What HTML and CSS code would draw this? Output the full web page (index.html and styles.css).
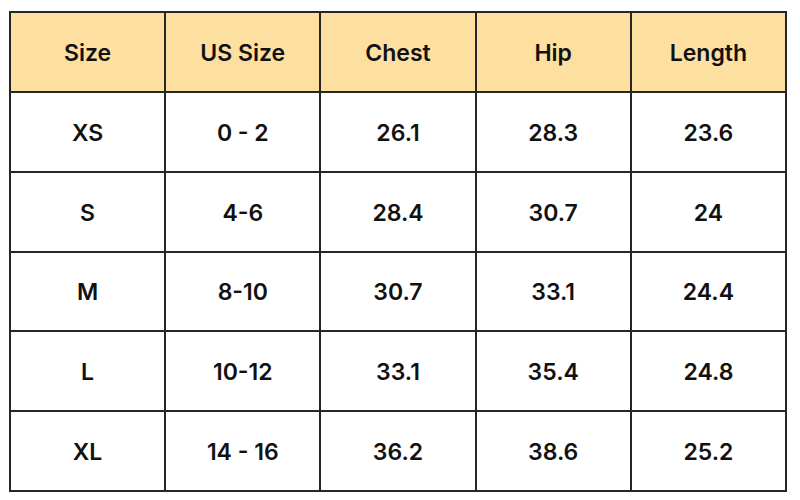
FILE: index.html
```html
<!DOCTYPE html>
<html>
<head>
<meta charset="utf-8">
<link rel="stylesheet" href="styles.css">
</head>
<body>
<div class="chart">
  <div class="cell head">Size</div>
  <div class="cell head">US Size</div>
  <div class="cell head">Chest</div>
  <div class="cell head">Hip</div>
  <div class="cell head">Length</div>

  <div class="cell">XS</div>
  <div class="cell">0 - 2</div>
  <div class="cell">26.1</div>
  <div class="cell">28.3</div>
  <div class="cell">23.6</div>

  <div class="cell">S</div>
  <div class="cell">4-6</div>
  <div class="cell">28.4</div>
  <div class="cell">30.7</div>
  <div class="cell">24</div>

  <div class="cell">M</div>
  <div class="cell">8-10</div>
  <div class="cell">30.7</div>
  <div class="cell">33.1</div>
  <div class="cell">24.4</div>

  <div class="cell">L</div>
  <div class="cell">10-12</div>
  <div class="cell">33.1</div>
  <div class="cell">35.4</div>
  <div class="cell">24.8</div>

  <div class="cell">XL</div>
  <div class="cell">14 - 16</div>
  <div class="cell">36.2</div>
  <div class="cell">38.6</div>
  <div class="cell">25.2</div>
</div>
</body>
</html>
```

FILE: styles.css
```css
html, body {
  margin: 0;
  padding: 0;
  background: #ffffff;
}

body {
  padding: 11px 0 0 9px;
  font-family: "Inter", "Liberation Sans", sans-serif;
}

.chart {
  width: 778px;
  height: 481px;
  box-sizing: border-box;
  display: grid;
  grid-template-columns: repeat(5, 1fr);
  grid-template-rows: repeat(6, 1fr);
  gap: 2px;
  padding: 2px;
  background: #262626;
}

.cell {
  background: #ffffff;
  display: flex;
  align-items: center;
  justify-content: center;
  font-size: 23px;
  font-weight: 600;
  color: #111111;
  padding-top: 2px;
}

.head {
  background: #fde0a0;
}
```
